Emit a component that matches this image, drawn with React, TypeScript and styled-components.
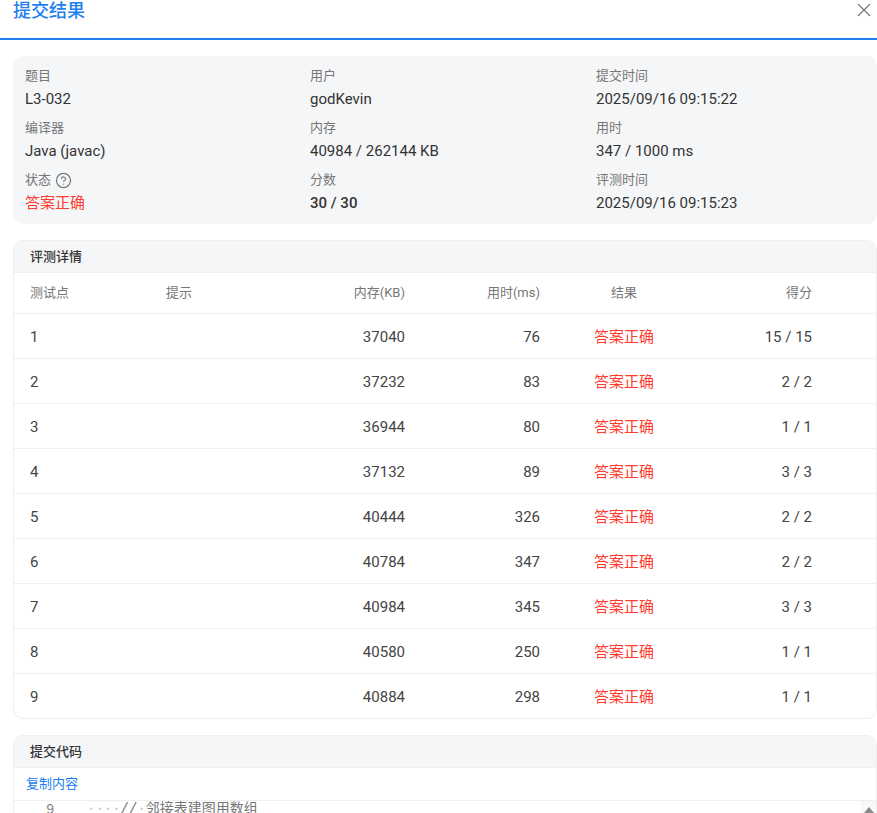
import React from "react";
import styled, { createGlobalStyle } from "styled-components";
import { CircleHelp } from "lucide-react";

const Global = createGlobalStyle`
  html, body { margin: 0; padding: 0; height: 813px; overflow: hidden; background: #fff; }
  body { font-family: Roboto, "Noto Sans CJK SC", sans-serif; color: #333; }
`;
const Page = styled.div`width: 877px; height: 813px; overflow: hidden; display: flex; flex-direction: column;`;
const Header = styled.header`
  height: 38px; flex: none; box-sizing: content-box; border-bottom: 2px solid #2080f0;
  display: flex; justify-content: space-between; padding: 0 6px 0 13px;
`;
const Title = styled.h1`margin: 0; font-size: 18px; line-height: 21px; font-weight: 500; color: #2080f0;`;
const Close = styled.button`
  border: 0; background: none; padding: 0; width: 14px; height: 14px; margin-top: 3px; color: #777; display: flex;
`;
const Content = styled.main`padding: 16px 0 0 13px; display: flex; flex-direction: column; gap: 16px;`;
const Summary = styled.section`
  height: 168px; box-sizing: border-box; background: #f5f6f8; border-radius: 10px; padding: 10px 12px 0;
  display: grid; grid-template-columns: 285px 286px 1fr; grid-auto-rows: 52px;
`;
const Item = styled.div`display: flex; flex-direction: column;`;
const Label = styled.div`
  font-size: 13px; line-height: 20px; color: #777; display: flex; align-items: center; gap: 4px;
`;
const Value = styled.div<{ $tone?: "ok" | "strong" }>`
  font-size: 15px; line-height: 26px;
  color: ${p => (p.$tone === "ok" ? "#ff3b30" : "#333")};
  font-weight: ${p => (p.$tone === "strong" ? 500 : 400)};
`;
const Card = styled.section`
  border: 1px solid #eeeff1; border-radius: 10px; overflow: hidden; background: #fff;
`;
const CardTitle = styled.div`
  height: 32px; box-sizing: border-box; border-bottom: 1px solid #eeeff1; background: #f5f6f8; padding-left: 16px;
  font-size: 13px; font-weight: 500; line-height: 31px; color: #333;
`;
const Row = styled.div<{ $head?: boolean }>`
  display: grid; grid-template-columns: 136px 100px 139px 135px 168px 104px; padding-left: 16px;
  height: ${p => (p.$head ? "41px" : "45px")}; box-sizing: border-box; align-items: center;
  padding-top: ${p => (p.$head ? "0" : "1px")};
  border-bottom: 1px solid #eeeff1;
  font-size: ${p => (p.$head ? "13px" : "15px")};
  line-height: 22px;
  color: ${p => (p.$head ? "#777" : "#444")};
  &:last-child { border-bottom: 0; height: 44px; }
`;
const Cell = styled.div<{ $align?: "right" | "center"; $ok?: boolean }>`
  text-align: ${p => p.$align ?? "left"};
  color: ${p => (p.$ok ? "#ff3b30" : "inherit")};
`;
const CopyBar = styled.div`
  height: 33px; box-sizing: border-box; border-bottom: 1px solid #eeeff1;
  padding-left: 12px; display: flex; align-items: center;
`;
const CopyLink = styled.a`font-size: 13px; line-height: 20px; color: #2080f0;`;
const Code = styled.div`display: flex; height: 19px;`;
const LineNo = styled.div`
  width: 73px; flex: none; box-sizing: border-box; padding-left: 32px;
  font: 14px/19px "Liberation Mono", monospace; color: #888;
`;
const CodeText = styled.div`
  flex: 1; font: 14px/16px "Liberation Mono", "Noto Sans CJK SC", monospace; color: #777; white-space: pre;
`;
const Ws = styled.span`color: #c8c8c8;`;
const Track = styled.div`
  width: 15px; flex: none; background: #f8f8f8; display: flex; justify-content: center; padding-top: 6px; box-sizing: border-box;
`;
const Arrow = styled.div`
  width: 0; height: 0; border-left: 5px solid transparent; border-right: 5px solid transparent; border-bottom: 6px solid #888;
`;

const rows = [
  [1, 37040, 76, "15 / 15"], [2, 37232, 83, "2 / 2"], [3, 36944, 80, "1 / 1"],
  [4, 37132, 89, "3 / 3"], [5, 40444, 326, "2 / 2"], [6, 40784, 347, "2 / 2"],
  [7, 40984, 345, "3 / 3"], [8, 40580, 250, "1 / 1"], [9, 40884, 298, "1 / 1"],
];

export default function App() {
  return (
    <Page>
      <Global />
      <Header>
        <Title>提交结果</Title>
        <Close aria-label="关闭">
          <svg width="14" height="14" viewBox="0 0 14 14" fill="none" stroke="currentColor" strokeWidth="1.2">
            <path d="M1 1 13 13M13 1 1 13" />
          </svg>
        </Close>
      </Header>
      <Content>
        <Summary>
          <Item><Label>题目</Label><Value>L3-032</Value></Item>
          <Item><Label>用户</Label><Value>godKevin</Value></Item>
          <Item><Label>提交时间</Label><Value>2025/09/16 09:15:22</Value></Item>
          <Item><Label>编译器</Label><Value>Java (javac)</Value></Item>
          <Item><Label>内存</Label><Value>40984 / 262144 KB</Value></Item>
          <Item><Label>用时</Label><Value>347 / 1000 ms</Value></Item>
          <Item><Label>状态 <CircleHelp size={17} strokeWidth={1.7} /></Label><Value $tone="ok">答案正确</Value></Item>
          <Item><Label>分数</Label><Value $tone="strong">30 / 30</Value></Item>
          <Item><Label>评测时间</Label><Value>2025/09/16 09:15:23</Value></Item>
        </Summary>
        <Card>
          <CardTitle>评测详情</CardTitle>
          <Row $head>
            <Cell>测试点</Cell><Cell>提示</Cell><Cell $align="right">内存(KB)</Cell>
            <Cell $align="right">用时(ms)</Cell><Cell $align="center">结果</Cell><Cell $align="right">得分</Cell>
          </Row>
          {rows.map(r => (
            <Row key={r[0]}>
              <Cell>{r[0]}</Cell><Cell /><Cell $align="right">{r[1]}</Cell>
              <Cell $align="right">{r[2]}</Cell><Cell $align="center" $ok>答案正确</Cell><Cell $align="right">{r[3]}</Cell>
            </Row>
          ))}
        </Card>
        <Card>
          <CardTitle>提交代码</CardTitle>
          <CopyBar><CopyLink>复制内容</CopyLink></CopyBar>
          <Code>
            <LineNo>9</LineNo>
            <CodeText><Ws>····</Ws>//<Ws>·</Ws>邻接表建图用数组</CodeText>
            <Track><Arrow /></Track>
          </Code>
        </Card>
      </Content>
    </Page>
  );
}
